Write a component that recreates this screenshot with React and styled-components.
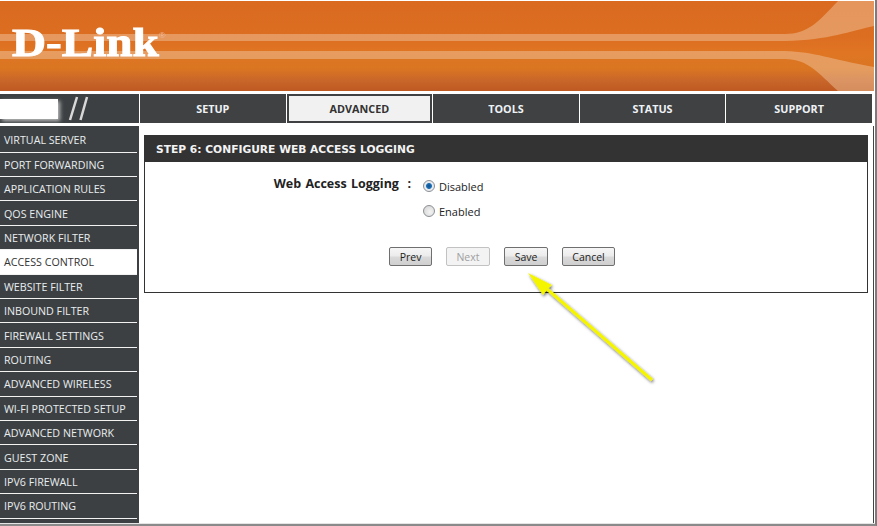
import React from "react";
import styled, { createGlobalStyle } from "styled-components";

const GlobalStyle = createGlobalStyle`
  html, body {
    margin: 0;
    padding: 0;
    background: #fff;
  }
  body {
    width: 877px;
    height: 526px;
    overflow: hidden;
    font-family: "Liberation Sans", Arial, sans-serif;
  }
`;

const Page = styled.div`
  position: relative;
  width: 877px;
  height: 526px;
  box-sizing: border-box;
  border-right: 2px solid #7c7c7c;
  border-bottom: 2px solid #8a8a8a;
  background: #fff;
  overflow: hidden;
`;

const Shell = styled.div`
  height: 524px;
  box-sizing: border-box;
  padding-top: 1px;
  border-bottom: 1px solid #e4e4e4;
`;

const Banner = styled.div`
  position: relative;
  width: 874px;
  height: 90px;
  overflow: hidden;
  background: linear-gradient(#d96a20 0, #dc6e21 40%, #e07624 58%, #d97522 76%, #c9662a 88%, #be5a22 100%);
`;

const BannerArt = styled.svg`
  position: absolute;
  inset: 0;
`;

const Logo = styled.div`
  position: absolute;
  left: 12px;
  top: 21px;
  font-family: "Liberation Serif", "Times New Roman", serif;
  font-weight: 700;
  font-size: 41px;
  line-height: 40px;
  white-space: nowrap;
  color: #fff;
  -webkit-text-stroke: 1px #fff;
  transform: scaleX(1.15);
  transform-origin: left center;
`;

const Reg = styled.span`
  position: relative;
  top: -18px;
  font-family: "Liberation Sans", sans-serif;
  font-weight: 400;
  font-size: 8px;
  color: #efb998;
  -webkit-text-stroke: 0;
`;

const Nav = styled.div`
  display: flex;
  gap: 1px;
  width: 872px;
  height: 29px;
  margin-top: 3px;
`;

const Brand = styled.div`
  position: relative;
  width: 139px;
  background: #3d4042;
  overflow: hidden;
  flex: none;
`;

const ModelBox = styled.div`
  position: absolute;
  left: 0;
  top: 5px;
  width: 58px;
  height: 20px;
  background: #fff;
  box-shadow: 2px 2px 4px rgba(205, 205, 205, 0.9);
`;

const Slashes = styled.svg`
  position: absolute;
  left: 66px;
  top: 0;
`;

const Tab = styled.div`
  flex: 1 1 0;
  display: flex;
  align-items: center;
  justify-content: center;
  font-family: "Open Sans", "DejaVu Sans", sans-serif;
  font-size: 10.8px;
  font-weight: 700;
  color: ${props => (props.active ? "#333" : "#eef2f5")};
  background: ${props => (props.active ? "#f1f1f1" : "#404143")};
  box-shadow: ${props => (props.active ? "inset 0 0 0 2px #404143" : "none")};
`;

const Body = styled.div`
  display: flex;
  box-sizing: border-box;
  width: 874px;
  height: 397px;
  margin-top: 3px;
  border-right: 1px solid #444;
`;

const Side = styled.ul`
  flex: none;
  width: 139px;
  height: 397px;
  margin: 0;
  padding: 0;
  list-style: none;
  background: #3d4042;
`;

const SideItem = styled.li`
  box-sizing: border-box;
  height: ${props => props.h}px;
  width: 137px;
  padding-left: 4px;
  padding-top: ${props => props.top}px;
  display: flex;
  align-items: center;
  font-family: "Open Sans", "DejaVu Sans", sans-serif;
  font-size: 10.7px;
  white-space: nowrap;
  color: ${props => (props.active ? "#333" : "#e8edf0")};
  background: ${props => (props.active ? "#fff" : "transparent")};
  border-bottom: 1px solid #f2f2f2;
`;

const Main = styled.div`
  width: 724px;
  margin: 9px 0 0 5px;
`;

const Card = styled.section`
  box-sizing: border-box;
  width: 724px;
  height: 158px;
  border: 1px solid #333;
  background: #fff;
`;

const CardTitle = styled.h2`
  margin: 0;
  height: 26px;
  padding-left: 11px;
  display: flex;
  align-items: center;
  background: #333;
  font-family: "DejaVu Sans", sans-serif;
  font-size: 10.7px;
  font-weight: 700;
  color: #f3f3f3;
`;

const Form = styled.div`
  display: flex;
  padding-top: 16px;
`;

const FieldLabel = styled.div`
  width: 266px;
  margin-top: -2px;
  text-align: right;
  font-family: "Open Sans", "DejaVu Sans", sans-serif;
  font-size: 12.5px;
  line-height: 16px;
  font-weight: 700;
  color: #222;
  word-spacing: 1px;
`;

const Options = styled.div`
  display: flex;
  flex-direction: column;
  gap: 9px;
  margin-left: 12px;
`;

const Option = styled.label`
  display: flex;
  align-items: center;
  gap: 4px;
  height: 16px;
  font-family: "Open Sans", "DejaVu Sans", sans-serif;
  font-size: 11px;
  color: #222;
`;

const Radio = styled.span`
  width: 12px;
  height: 12px;
  margin-top: -1px;
  border-radius: 50%;
  box-sizing: border-box;
  border: 1px solid #8a8f94;
  background: ${props => props.checked
    ? "radial-gradient(circle, #0f4f8a 0, #1c6fb5 2.5px, #e4e8ec 3.4px, #f2f4f6 100%)"
    : "radial-gradient(circle at 60% 60%, #f4f4f4 0, #d0d0d0 100%)"};
`;

const Buttons = styled.div`
  display: flex;
  gap: 14px;
  margin: 28px 0 0 244px;
`;

const Button = styled.button`
  box-sizing: border-box;
  height: 19px;
  width: ${props => props.w}px;
  padding: 0;
  border: 1px solid ${props => (props.disabled ? "#c2c2c2" : "#6f6f6f")};
  border-radius: 2px;
  background: ${props => props.disabled
    ? "#f3f3f3"
    : "linear-gradient(#f6f6f6 0, #ececec 45%, #d9d9d9 55%, #cfcfcf 100%)"};
  font-family: "Open Sans", "DejaVu Sans", sans-serif;
  font-size: 10.5px;
  color: ${props => (props.disabled ? "#a0a0a0" : "#222")};
`;

const Arrow = styled.svg`
  position: absolute;
  left: 510px;
  top: 260px;
  overflow: visible;
`;

// label, row height, top padding to nudge the text onto the reference's baseline
const menu = [
  ["VIRTUAL SERVER", 27, 2],
  ["PORT FORWARDING", 24, 0],
  ["APPLICATION RULES", 24, 0],
  ["QOS ENGINE", 25, 1],
  ["NETWORK FILTER", 24, 0],
  ["ACCESS CONTROL", 25, 0],
  ["WEBSITE FILTER", 24, 0],
  ["INBOUND FILTER", 24, 0],
  ["FIREWALL SETTINGS", 25, 1],
  ["ROUTING", 24, 0],
  ["ADVANCED WIRELESS", 25, 0],
  ["WI-FI PROTECTED SETUP", 24, 0],
  ["ADVANCED NETWORK", 24, 0],
  ["GUEST ZONE", 25, 1],
  ["IPV6 FIREWALL", 24, 0],
  ["IPV6 ROUTING", 25, 0],
];

const tabs = ["SETUP", "ADVANCED", "TOOLS", "STATUS", "SUPPORT"];

const App = () => (
  <Page>
    <GlobalStyle />
    <Shell>
      <Banner>
        <BannerArt width="874" height="90" viewBox="0 0 874 90">
          <path d="M0 33H785C808 33 818 21 838 0H874V25C850 30 830 39 785 40H0Z" fill="#f2cda8" opacity="0.45" />
          <path d="M0 50H785C815 51 830 58 874 66V90H838C818 72 808 58 785 58H0Z" fill="#f2cda8" opacity="0.45" />
        </BannerArt>
        <Logo>D-Link<Reg>®</Reg></Logo>
      </Banner>
      <Nav>
        <Brand>
          <ModelBox />
          <Slashes width="26" height="29" viewBox="0 0 26 29">
            <path d="M4 26L11 3M14.5 26L21 3" stroke="#d8d8d8" strokeWidth="2.5" fill="none" />
          </Slashes>
        </Brand>
        {tabs.map(tab => (
          <Tab key={tab} active={tab === "ADVANCED"}>{tab}</Tab>
        ))}
      </Nav>
      <Body>
        <Side>
          {menu.map(([label, h, top]) => (
            <SideItem key={label} h={h} top={top} active={label === "ACCESS CONTROL"}>{label}</SideItem>
          ))}
        </Side>
        <Main>
          <Card>
            <CardTitle>STEP 6: CONFIGURE WEB ACCESS LOGGING</CardTitle>
            <Form>
              <FieldLabel>Web Access Logging &nbsp;:</FieldLabel>
              <Options>
                <Option><Radio checked />Disabled</Option>
                <Option><Radio />Enabled</Option>
              </Options>
            </Form>
            <Buttons>
              <Button w={43}>Prev</Button>
              <Button w={44} disabled>Next</Button>
              <Button w={44}>Save</Button>
              <Button w={53}>Cancel</Button>
            </Buttons>
          </Card>
        </Main>
      </Body>
    </Shell>
    <Arrow width="150" height="125" viewBox="0 0 150 125">
      <defs>
        <filter id="arrow-shadow" x="-20%" y="-20%" width="140%" height="140%">
          <feDropShadow dx="1" dy="1.5" stdDeviation="1.5" floodColor="#000" floodOpacity="0.6" />
        </filter>
      </defs>
      <g filter="url(#arrow-shadow)">
        <path d="M142 120L37 29" stroke="#f5f500" strokeWidth="3" fill="none" />
        <path d="M18 13L42 25L37.5 29L33 35Z" fill="#f5f500" />
      </g>
    </Arrow>
  </Page>
);

export default App;
